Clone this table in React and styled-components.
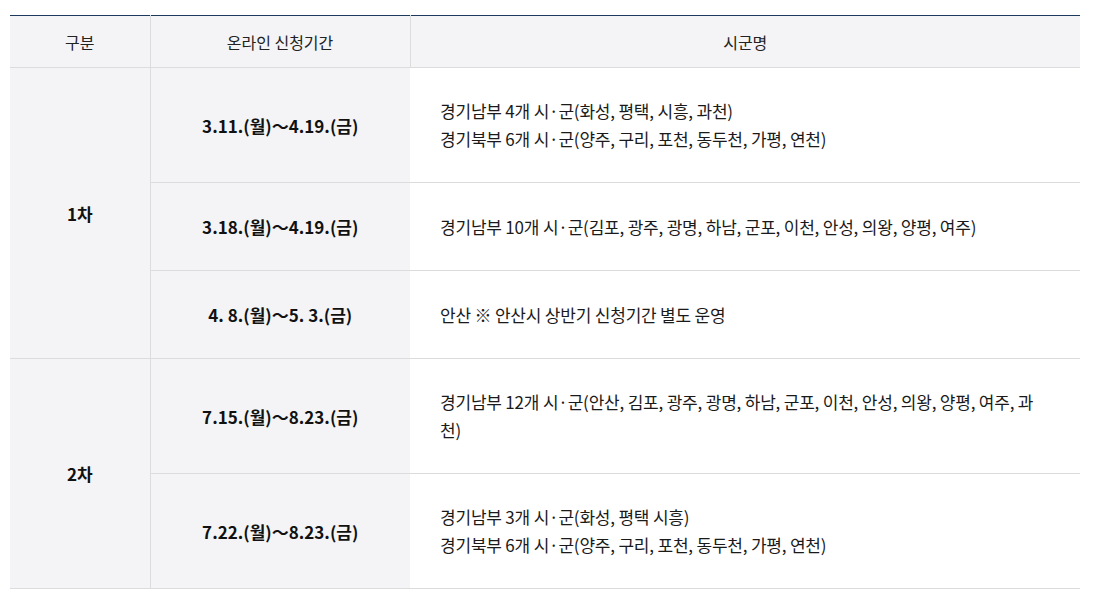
import React from 'react';
import styled, { createGlobalStyle } from 'styled-components';

const GlobalStyle = createGlobalStyle`
  html, body {
    margin: 0;
    padding: 0;
    background: #fff;
  }
  body {
    font-family: "Noto Sans CJK KR", "Noto Sans", sans-serif;
    color: #111;
  }
`;

const Wrap = styled.div`
  padding: 15px 14px 0 10px;
`;

const Table = styled.table`
  width: 1070px;
  border-collapse: collapse;
  table-layout: fixed;
  border-top: 1px solid #1c3a5e;
`;

const HeadCell = styled.th`
  height: 51px;
  padding: 0;
  background: #f4f4f6;
  font-size: 16px;
  font-weight: 400;
  color: #222;
  text-align: center;
  border-bottom: 1px solid #dcdcdc;
  border-left: 1px solid #dcdcdc;
  &:first-child {
    border-left: none;
  }
`;

const GroupCell = styled.td`
  background: #f4f4f6;
  font-size: 17px;
  font-weight: 700;
  text-align: center;
  vertical-align: middle;
  border-bottom: 1px solid #dcdcdc;
  padding: 0;
`;

const DateCell = styled.td`
  height: ${p => p.$h}px;
  background: #f4f4f6;
  font-size: 17px;
  font-weight: 700;
  text-align: center;
  vertical-align: middle;
  border-bottom: 1px solid #dcdcdc;
  border-left: 1px solid #dcdcdc;
  padding: 0;
  white-space: nowrap;
`;

const CityCell = styled.td`
  font-size: 17px;
  letter-spacing: -0.2px;
  line-height: 28px;
  color: #1a1a1a;
  vertical-align: middle;
  border-bottom: 1px solid #dcdcdc;
  padding: 0 40px 0 30px;
`;

const rows = [
  {
    group: '1차',
    span: 3,
    items: [
      { date: '3.11.(월)～4.19.(금)', h: 114, lines: ['경기남부 4개 시·군(화성, 평택, 시흥, 과천)', '경기북부 6개 시·군(양주, 구리, 포천, 동두천, 가평, 연천)'] },
      { date: '3.18.(월)～4.19.(금)', h: 87, lines: ['경기남부 10개 시·군(김포, 광주, 광명, 하남, 군포, 이천, 안성, 의왕, 양평, 여주)'] },
      { date: '4. 8.(월)～5. 3.(금)', h: 87, lines: ['안산 ※ 안산시 상반기 신청기간 별도 운영'] },
    ],
  },
  {
    group: '2차',
    span: 2,
    items: [
      { date: '7.15.(월)～8.23.(금)', h: 114, lines: ['경기남부 12개 시·군(안산, 김포, 광주, 광명, 하남, 군포, 이천, 안성, 의왕, 양평, 여주, 과천)'] },
      { date: '7.22.(월)～8.23.(금)', h: 114, lines: ['경기남부 3개 시·군(화성, 평택 시흥)', '경기북부 6개 시·군(양주, 구리, 포천, 동두천, 가평, 연천)'] },
    ],
  },
];

export default function App() {
  return (
    <Wrap>
      <GlobalStyle />
      <Table>
        <colgroup>
          <col style={{ width: 140 }} />
          <col style={{ width: 260 }} />
          <col />
        </colgroup>
        <thead>
          <tr>
            <HeadCell>구분</HeadCell>
            <HeadCell>온라인 신청기간</HeadCell>
            <HeadCell>시군명</HeadCell>
          </tr>
        </thead>
        <tbody>
          {rows.map(g =>
            g.items.map((it, i) => (
              <tr key={g.group + i}>
                {i === 0 && <GroupCell rowSpan={g.span}>{g.group}</GroupCell>}
                <DateCell $h={it.h}>{it.date}</DateCell>
                <CityCell>
                  {it.lines.map((l, j) => (
                    <div key={j}>{l}</div>
                  ))}
                </CityCell>
              </tr>
            ))
          )}
        </tbody>
      </Table>
    </Wrap>
  );
}
